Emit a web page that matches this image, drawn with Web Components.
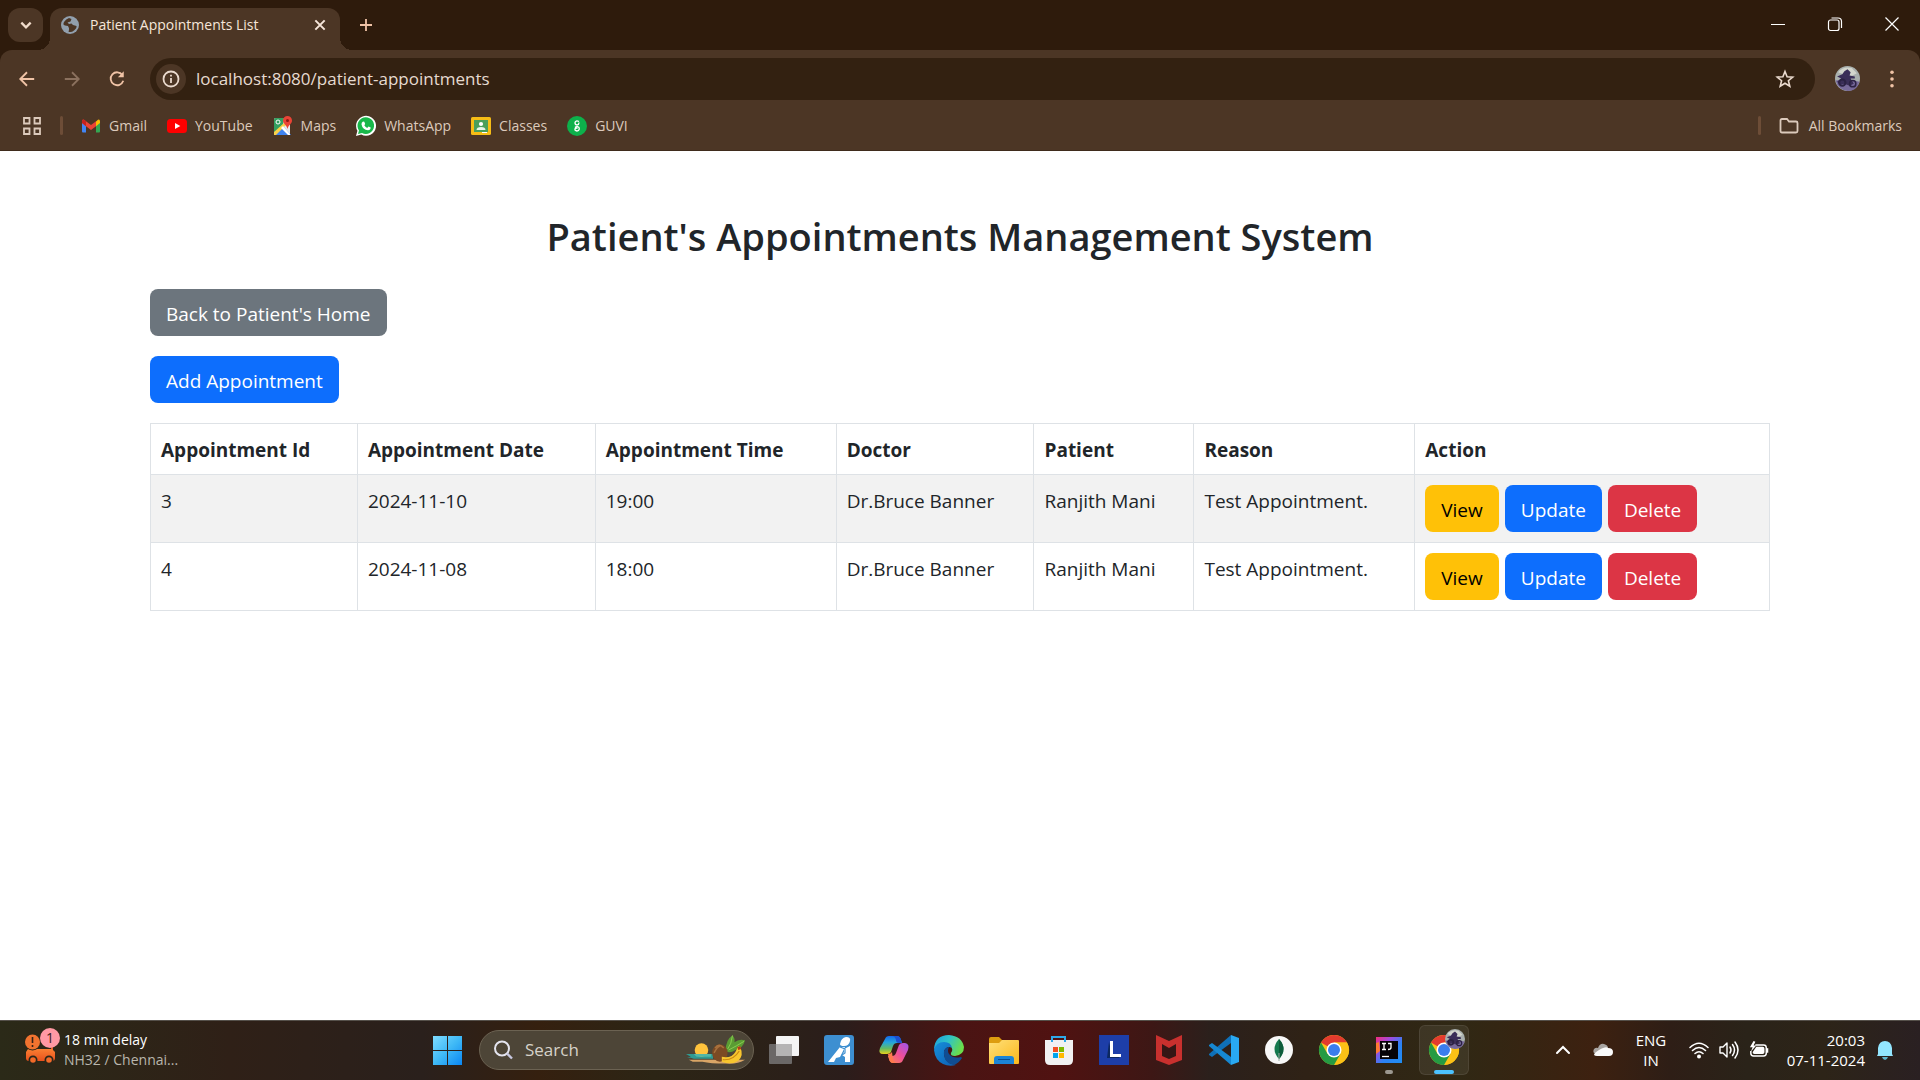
<!DOCTYPE html>
<html lang="en">
<head>
<meta charset="utf-8">
<title>Patient Appointments List</title>
<style>
  html, body { margin: 0; height: 100%; }
  body { font-family: "Open Sans", "Noto Sans", sans-serif; background: #fff; overflow: hidden; }
  desktop-shell { height: 100%; }
</style>
</head>
<body>
<desktop-shell>
  <tab-strip slot="window"><browser-tab icon="globe">Patient Appointments List</browser-tab></tab-strip>
  <address-bar slot="window" url="localhost:8080/patient-appointments"></address-bar>
  <bookmarks-bar slot="window">
    <bookmark-link icon="gmail">Gmail</bookmark-link>
    <bookmark-link icon="youtube">YouTube</bookmark-link>
    <bookmark-link icon="maps">Maps</bookmark-link>
    <bookmark-link icon="whatsapp">WhatsApp</bookmark-link>
    <bookmark-link icon="classes">Classes</bookmark-link>
    <bookmark-link icon="guvi">GUVI</bookmark-link>
    <bookmark-link slot="end" icon="folder">All Bookmarks</bookmark-link>
  </bookmarks-bar>
  <appointments-page slot="page" heading="Patient's Appointments Management System">
    <action-button slot="actions" variant="secondary">Back to Patient's Home</action-button>
    <action-button slot="actions" variant="primary">Add Appointment</action-button>
    <appointments-table></appointments-table>
  </appointments-page>
  <task-bar slot="taskbar">
    <task-app icon="taskview" label="Task view"></task-app>
    <task-app icon="ai" label="Assistant"></task-app>
    <task-app icon="copilot" label="Copilot"></task-app>
    <task-app icon="edge" label="Edge"></task-app>
    <task-app icon="explorer" label="File Explorer"></task-app>
    <task-app icon="store" label="Store"></task-app>
    <task-app icon="lbox" label="L"></task-app>
    <task-app icon="mcafee" label="McAfee"></task-app>
    <task-app icon="vscode" label="VS Code"></task-app>
    <task-app icon="mongo" label="MongoDB Compass"></task-app>
    <task-app icon="chrome" label="Chrome"></task-app>
    <task-app icon="intellij" label="IntelliJ IDEA" state="running"></task-app>
    <task-app icon="chromeuser" label="Chrome profile" state="active"></task-app>
    <system-tray slot="tray"></system-tray>
  </task-bar>
</desktop-shell>

<script>
const line = (w, c = 'currentColor') => `fill="none" stroke="${c}" stroke-width="${w}"`;

const chromeMark = `
  <circle cx="15" cy="15" r="15" fill="#fbc116"/>
  <path d="M15 15 2 7.500A15 15 0 0 1 28 7.500H15Z" fill="#e33b2e"/>
  <path d="M28 7.500A15 15 0 0 1 15 30L21.500 18.750 15 7.500Z" fill="#fbc116"/>
  <path d="M2 7.500A15 15 0 0 0 15 30L21.500 18.750 15 20 8.500 18.750Z" fill="#259b43"/>
  <circle cx="15" cy="15" r="7.500" fill="#fff"/><circle cx="15" cy="15" r="6" fill="#3b7ded"/>`;

const bikePhoto = (cx, cy, r) => `
  <g transform="translate(${cx} ${cy}) scale(${r / 12})">
    <circle r="12" fill="#a9b0ae"/>
    <path d="M-9-6Q-4-12 4-10L9-5 3-2-4-4Z" fill="#d3d6cd"/>
    <path d="M-11.500 2Q0 0 11.500 3 9 12 0 12-9 11-11.500 2Z" fill="#77699a"/>
    <path d="M-10-2-5-4-3-7 0-9 3-6 2-3 7-2 7 0 3 0 6 5 2 7-3 5-7 6-10 3-6 0Z" fill="#3a2e58"/>
    <circle cx="-5" cy="4" r="3" ${line(2, '#2c2244')}/><circle cx="5" cy="5" r="3" ${line(1.5, '#2c2244')}/>
  </g>`;

const ICONS = {
  chevronDown: ['0 0 12 12', `<path d="M2 4l4 4 4-4" ${line(2)}/>`],
  chevronUp: ['0 0 16 16', `<path d="M2 11l6-6 6 6" ${line(2)} stroke-linecap="round"/>`],
  close: ['0 0 12 12', `<path d="M2 2l8 8M10 2l-8 8" ${line(1.7)}/>`],
  plus: ['0 0 14 14', `<path d="M7 1v12M1 7h12" ${line(1.8)}/>`],
  minimize: ['0 0 14 14', `<path d="M0 7.500h14" ${line(1)}/>`],
  restore: ['0 0 14 14', `<rect x=".5" y="3" width="10.500" height="10.500" rx="2" ${line(1.2)}/><path d="M3.500 1h6.500q3.500 0 3.500 3.500V11" ${line(1.2)}/>`],
  winclose: ['0 0 14 14', `<path d="M.5.5l13 13M13.500.5l-13 13" ${line(1.2)}/>`],
  globe: ['0 0 18 18', `<circle cx="9" cy="9" r="9" fill="#92a0ae"/><path d="M8 2Q5 3 3 6 1.500 9 4 9.500L7 10 8 12.500 7 15.500Q10 17 13 14.500 16 12 15.500 10L12 9 10.500 7.500 8 8 6.500 6.500 9.500 5.500 10.500 3Z" fill="#4c3625"/><path d="M11 2.500 14 5 15.500 8.500 12.500 8 10.500 6.500Z" fill="#92a0ae"/><path d="M4 10.500 7 11 8 13 7.500 16 4.500 14Z" fill="#92a0ae"/>`],
  back: ['0 0 20 20', `<path d="M18 10H3M10 2.500 2.500 10l7.500 7.500" ${line(2)}/>`],
  forward: ['0 0 20 20', `<path d="M2 10h15M10 2.500 17.500 10 10 17.500" ${line(2)}/>`],
  reload: ['0 0 20 20', `<path d="M16 5.500A7.200 7.200 0 1 0 17 12" ${line(2)}/><path d="M17.500 1.500V8H11Z" fill="currentColor"/>`],
  info: ['0 0 18 18', `<circle cx="9" cy="9" r="7.500" ${line(1.8)}/><path d="M9 8v5M9 4.800v1.800" ${line(1.8)}/>`],
  star: ['0 0 20 20', `<path d="M10 2.500l2.100 5.200 5.600.4-4.300 3.600 1.400 5.500L10 14.200l-4.800 3 1.400-5.500-4.300-3.600 5.600-.4Z" ${line(1.6)}/>`],
  dots: ['0 0 20 20', `<circle cx="10" cy="2.500" r="2" fill="currentColor"/><circle cx="10" cy="10" r="2" fill="currentColor"/><circle cx="10" cy="17.500" r="2" fill="currentColor"/>`],
  avatar: ['0 0 25 25', bikePhoto(12.5, 12.5, 12.5)],
  grid: ['0 0 18 18', `<path d="M1 1h5.500v5.500H1ZM11.500 1H17v5.500h-5.500ZM1 11.500h5.500V17H1ZM11.500 11.500H17V17h-5.500Z" ${line(1.8)}/>`],
  folder: ['0 0 20 20', `<path d="M1.500 15V4.500q0-1.500 1.500-1.500h5l2 2.500h7q1.500 0 1.500 1.500v8q0 1.500-1.500 1.500H3q-1.500 0-1.500-1.500Z" ${line(1.8)}/>`],
  gmail: ['0 0 20 20', `<path d="M1 5v10.500q0 1 1 1h3V9Z" fill="#4285f4"/><path d="M19 5v10.500q0 1-1 1h-3V9Z" fill="#34a853"/><path d="M15 5.500 17 3.700Q19 3 19 5.500V7l-4 3.200Z" fill="#fbbc04"/><path d="M1 7V5.500Q1 3 3 3.700L10 9l5-3.800v5L10 14 5 10.200Z" fill="#ea4335"/><path d="M1 5.500Q1 3 3 3.700l2 1.600v5L1 7Z" fill="#c5221f"/>`],
  youtube: ['0 0 20 20', `<rect x="0" y="3" width="20" height="14" rx="3.500" fill="#f00"/><path d="M8 7l5.300 3L8 13Z" fill="#fff"/>`],
  maps: ['0 0 20 20', `<rect x="1" y="2" width="16" height="17" rx="1.500" fill="#e8eaed"/><path d="M1 3.500Q1 2 2.500 2H11L10 9 1 18Z" fill="#34a060"/><path d="M1 19 10 10l8 9Z" fill="#3f83f0"/><path d="M1 16 11 7l2 2L3 19H1Z" fill="#fbd14a"/><path d="M8 12l2-2 7 8v1h-2Z" fill="#fff"/><circle cx="5" cy="6" r="2" ${line(1, '#fff')}/><path d="M14.500 0a4.500 4.500 0 0 1 4.500 4.500c0 3.500-3.500 4-4.500 8.500-1-4.500-4.500-5-4.500-8.500A4.500 4.500 0 0 1 14.500 0Z" fill="#ea4335"/><circle cx="14.500" cy="4.500" r="1.500" fill="#8c1a14"/>`],
  whatsapp: ['0 0 20 20', `<path d="M0 20l1.400-5.200A10 10 0 1 1 5.300 18.600Z" fill="#fff"/><path d="M2 18l1-3.600A8.300 8.300 0 1 1 6 17Z" fill="#18b84a"/><path d="M7 5.500l1.300.2.900 2.300-.9 1.300q.9 1.800 2.900 2.600l1.300-1.300 2.200 1q0 2.500-2.700 2.700Q6.500 13.500 5.500 8.500 5.300 6.500 7 5.500Z" fill="#fff"/>`],
  classes: ['0 0 20 20', `<rect y="1" width="20" height="18" rx="1.500" fill="#f6bd16"/><rect x="3" y="4" width="14" height="12" fill="#4a9f5b"/><circle cx="10" cy="8" r="2.100" fill="#fff"/><path d="M5.500 14q0-3 4.500-3t4.500 3Z" fill="#e6f4e9"/><path d="M11 16h5v1h-5Z" fill="#fff"/>`],
  guvi: ['0 0 20 20', `<circle cx="10" cy="10" r="10" fill="#0db14b"/><path d="M12 5.500Q8.500 4 8 6.700 8 9 10.300 9 12 8.500 12 6.500M8 11.500Q9 10.500 10.500 10.700 12.500 11.200 12.300 13 11.800 15 10 15 7.500 14.700 8 12.800 8.800 11.500 10.500 12.300" ${line(1.3, '#fff')}/>`],
  traffic: ['0 0 32 32', `<defs><linearGradient id="o" x2="0" y2="1"><stop stop-color="#fb7f32"/><stop offset="1" stop-color="#e9511c"/></linearGradient></defs><path d="M28 18V9" ${line(2, '#e9622a')}/><path d="M4 17h24l3 3v6q0 3-3 3H5q-3 0-3-3v-6Z" fill="url(#o)"/><circle cx="9" cy="28" r="4.500" fill="#29261a"/><circle cx="9" cy="28" r="2.800" fill="#f26a28"/><circle cx="25" cy="28" r="4.500" fill="#29261a"/><circle cx="25" cy="28" r="2.800" fill="#f26a28"/><circle cx="8.500" cy="10" r="8.500" fill="#2b2819"/><circle cx="8.500" cy="10" r="7.500" fill="#f1732f"/><path d="M8.500 5v6M8.500 13v2" ${line(1.6, '#332117')}/>`],
  start: ['0 0 30 30', `<defs><linearGradient id="w" x2="1" y2="1"><stop stop-color="#7fdcff"/><stop offset=".5" stop-color="#3fb9f6"/><stop offset="1" stop-color="#0a86f3"/></linearGradient></defs><path d="M1 1h14v14H1ZM16 1h14v14H16ZM1 16h14v14H1ZM16 16h14v14H16Z" fill="url(#w)"/>`],
  search: ['0 0 20 20', `<circle cx="9" cy="8.500" r="7" ${line(2, '#e4e4ee')}/><path d="M14 13.500l5 5" ${line(2.4, '#c8c8e0')}/>`],
  fruit: ['0 0 64 32', `<path d="M1 20h28v5H9l-3-1H2l4-1Z" fill="#2f9a92"/><path d="M4 26h58q-8 5-20 4-16 0-24-2H8Z" fill="#d9a566"/><circle cx="17" cy="16" r="7" fill="#ffc33c"/><path d="M9 20h18v3H12Z" fill="#52b6a5"/><path d="M42 17Q42 5 49 1q3 3 2 7 5-4 11-2-2 8-10 10-6 4-10 1Z" fill="#5a9c33"/><path d="M44 15Q48 10 49 1M45 16Q53 12 61 7" ${line(1, '#8bcc52')}/><ellipse cx="36" cy="19" rx="8" ry="9" fill="#7b4a24"/><path d="M31 14q4-6 9 0M30 19q3-6 6-7" ${line(1.5, '#a8713d')}/><path d="M38 23q10 2 14-5l3-6 2 1q4 9-2 14-7 5-17 1Z" fill="#f8c62e"/><path d="M39 26q11 1 17-9" ${line(1.2, '#c98713')}/><path d="M54 13l3-1 1 3-3 1Z" fill="#b33a1c"/>`],
  taskview: ['0 0 30 30', `<rect x="0" y="9" width="23" height="20" rx="1" fill="#6b6867"/><rect x="7" y="1" width="23" height="20" rx="1" fill="#f4f4f4"/><path d="M7 9h16v12H7Z" fill="#b5b4b4"/>`],
  ai: ['0 0 30 30', `<rect width="30" height="30" rx="3" fill="#3d8fd1"/><path d="M4 27 16 12h5l-5 10-4 1-2 4Z" fill="#fff"/><path d="M16 9Q17 3 22 2q5 0 4 4-1 5-6 5-4 0-4-2Z" fill="#fff"/><path d="M20 14l6-3v16h-5v-5l-3-2 2-3Z" fill="#fff"/><path d="M16 12l5 2v4l-3 2" ${line(1.2, '#3d8fd1')}/>`],
  copilot: ['0 0 30 30', `<defs><linearGradient id="a" x2="0" y2="1"><stop stop-color="#1468e8"/><stop offset=".35" stop-color="#23a5df"/><stop offset=".7" stop-color="#63bb63"/><stop offset="1" stop-color="#e9d21c"/></linearGradient><linearGradient id="b" x1="1" x2="0" y2="1"><stop stop-color="#9a55ef"/><stop offset=".5" stop-color="#ee4e9a"/><stop offset="1" stop-color="#ff8b45"/></linearGradient></defs><path d="M6 4Q7 1 10 1h8q3 0 4 4l1 3h-5q-3 0-4 3l-2 6q-1 2-4 2H4q-5 0-3-6Z" fill="url(#a)"/><path d="M24 25q-1 3-4 3h-6q-3 0-4-4l-1-3h4q3 0 4-3l3-8q1-2 4-2h2q5 1 3 7Z" fill="url(#b)"/><path d="M13 1h5q3 0 4 4l1 3h-3q-3 0-3-3-1-4-4-4Z" fill="#1c4fd0"/><path d="M9 19q3 0 4-2l1 8q1 3 4 3h-4q-3 0-4-4Z" fill="#ff7a4d"/>`],
  edge: ['0 0 30 30', `<defs><linearGradient id="e" x2="1" y2=".4"><stop stop-color="#1b9de0"/><stop offset=".5" stop-color="#2fc3c8"/><stop offset="1" stop-color="#6ade4c"/></linearGradient><linearGradient id="f" x2="1" y2="1"><stop stop-color="#1590dc"/><stop offset="1" stop-color="#0f5db1"/></linearGradient></defs><path d="M0 14Q1 0 15 0 28 1 30 12q0 8-9 9-5 0-4-3 3-4-1-7Q9 7 3 12Z" fill="url(#e)"/><path d="M0 15Q2 7 10 7q7 0 8 6-5-3-8 3-1 12 12 14-7 2-13-1Q1 25 0 15Z" fill="url(#f)"/><path d="M10 16q2-4 5-4-2 4 0 7 4 5 12 3l1 1q-3 5-8 7-11-2-10-14Z" fill="#104d92"/>`],
  explorer: ['0 0 30 30', `<defs><linearGradient id="x" x2="1" y2="1"><stop stop-color="#ffe07a"/><stop offset="1" stop-color="#fcb81b"/></linearGradient></defs><path d="M0 4q0-2 2-2h8l3 3v4H0Z" fill="#dd9d10"/><path d="M0 8h10l3-3h16q1 0 1 1v22q0 1-1 1H1q-1 0-1-1Z" fill="url(#x)"/><path d="M5 29v-5q0-3 3-3h14q3 0 3 3v5Z" fill="#1c84d6"/><path d="M9 24.500h12" ${line(1, '#0c4e91')}/>`],
  store: ['0 0 30 30', `<path d="M1 5h28v20q0 5-5 5H6q-5 0-5-5Z" fill="#f1f1f2"/><path d="M8 7V2h13v5" ${line(2, '#2ea9e9')}/><path d="M9 12h5v5H9Z" fill="#f25022"/><path d="M15 12h5v5h-5Z" fill="#7fba00"/><path d="M9 18h5v5H9Z" fill="#00a4ef"/><path d="M15 18h5v5h-5Z" fill="#ffb900"/>`],
  lbox: ['0 0 30 30', `<rect width="30" height="30" fill="#1d3ea8"/><path d="M10 7 8 23h12l2-3H13Z" fill="#0c2860"/><path d="M12.500 6v14.500h9.500" ${line(3, '#fff')}/>`],
  mcafee: ['0 0 30 30', `<path d="M2 0l13 6L28 0v25l-13 5-13-5Z" fill="#c8302e"/><path d="M8 9l7 4 7-4v12l-7 3-7-3Z" fill="#341615"/>`],
  vscode: ['0 0 30 30', `<path d="M0 19 22 0v8L3 22 0 20Z" fill="#0f70b8"/><path d="M0 10 3 8 22 22v8L0 11Z" fill="#1688d2"/><path d="M22 0l8 3v24l-8 3Z" fill="#29a9f2"/>`],
  mongo: ['0 0 30 30', `<circle cx="15" cy="15" r="14" fill="#f7f7f7"/><path d="M15 4q9 10 0 20-9-10 0-20Z" fill="#15794f"/><path d="M15 4q9 10 0 20Z" fill="#0d5b3a"/><path d="M15 18v8" ${line(1, '#9aaca2')}/>`],
  chrome: ['0 0 30 30', chromeMark],
  intellij: ['0 0 30 30', `<defs><linearGradient id="i" x2="1" y2="1"><stop stop-color="#f72c7a"/><stop offset=".3" stop-color="#a04be0"/><stop offset=".6" stop-color="#2c82f4"/><stop offset="1" stop-color="#1f8df2"/></linearGradient></defs><rect x="2" y="2" width="26" height="26" fill="url(#i)"/><path d="M2 8l3-1 1 9-4 3Z" fill="#ff7a31"/><rect x="6" y="6" width="18" height="18" fill="#060308"/><path d="M8 8.500h4M10 8.500v6M8 14.500h4M14 8.500h3v4q0 2-3 2" ${line(1.3, '#fff')}/><path d="M8 21.500h7" ${line(1.3, '#fff')}/>`],
  chromeuser: ['0 0 30 30', chromeMark + bikePhoto(26, 4, 10)],
  cloud: ['0 0 20 20', `<path d="M3 14Q-1 13 1 9 3 7 5 8 7 3 11 4q4 1 4 4l-8 6Z" fill="#a9a5a2"/><path d="M1 15q0-2 5-5 7-4 9-2 5 0 5 4t-4 4H4q-2 0-3-1Z" fill="#fafafa"/>`],
  wifi: ['0 0 20 20', `<path d="M1 7.500Q10-1 19 7.500M3.500 10.500q6.500-6 13 0M6 13.500q4-3.500 8 0" ${line(1.6, '#fff')} stroke-linecap="round"/><circle cx="10" cy="16.500" r="2" fill="#fff"/>`],
  volume: ['0 0 20 20', `<path d="M1 7h3l4-4v14l-4-4H1Z" ${line(1.4, '#fff')} stroke-linejoin="round"/><path d="M11 7q2 3 0 6M13.500 4.500q4 5.500 0 11M16 2q6 8 0 16" ${line(1.5, '#fff')} stroke-linecap="round"/>`],
  battery: ['0 0 22 20', `<path d="M7 4.500h9q3 0 3 3v6q0 3-3 3H5q-3 0-3-3V11" ${line(1.6, '#fff')}/><path d="M8 6.500h7q2 0 2 2v4q0 2-2 2H6q-2 0-2-2Z" fill="#fff"/><path d="M20 8v5" ${line(2.4, '#fff')}/><path d="M5 0 1 7h3l-2 5 6-7H5L7 1Z" fill="#fff"/>`],
  bell: ['0 0 20 20', `<path d="M3 14V8q1-7 7-7t7 7v6l1 2H2Z" fill="#93e6ff"/><path d="M7 17h6q-1 3-3 3t-3-3Z" fill="#5fb3cc"/>`]
};

const define = (name, css, html) => {
  customElements.define(name, class extends HTMLElement {
    connectedCallback() {
      if (this.shadowRoot) return;
      const root = this.attachShadow({ mode: 'open' });
      const t = document.createElement('template');
      t.innerHTML = `<style>:host,*{box-sizing:border-box}button,input{font:inherit;color:inherit;border:0;background:none;padding:0}button{display:grid;place-items:center;flex:none}a{color:inherit;text-decoration:none}${css}</style>` +
        (typeof html === 'function' ? html(this) : html);
      root.append(t.content.cloneNode(true));
    }
  });
};
const attr = (el, n) => el.getAttribute(n) || '';

define('ui-icon', `:host{display:block;flex:none}svg{display:block;width:100%;height:100%;overflow:visible}`, el => {
  const [box, body] = ICONS[attr(el, 'name')];
  return `<svg viewBox="${box}" aria-hidden="true">${body}</svg>`;
});

define('desktop-shell', `
  :host{display:flex;flex-direction:column}
  header{background:#2e1b0c;flex:none}
  main{flex:1;min-height:0;overflow:auto}`,
  `<header><slot name="window"></slot></header><main><slot name="page"></slot></main><slot name="taskbar"></slot>`);

define('tab-strip', `
  :host{display:flex;height:50px;padding-left:8px;color:#f1dccb}
  .menu{width:35px;height:34px;margin:8px 7px 0 0;border-radius:12px;background:#4c3625}
  .menu ui-icon{width:14px;height:14px}
  .new{width:52px;height:50px;color:#f0c3a6}
  .new ui-icon{width:14px;height:14px}
  .controls{display:flex;margin-left:auto;color:#fff}
  .controls button{width:57px;height:48px}
  .controls ui-icon{width:14px;height:14px}`,
  `<button class="menu" aria-label="Search tabs"><ui-icon name="chevronDown"></ui-icon></button>
   <slot></slot>
   <button class="new" aria-label="New tab"><ui-icon name="plus"></ui-icon></button>
   <div class="controls">
     <button aria-label="Minimize"><ui-icon name="minimize"></ui-icon></button>
     <button aria-label="Restore"><ui-icon name="restore"></ui-icon></button>
     <button aria-label="Close"><ui-icon name="winclose"></ui-icon></button>
   </div>`);

define('browser-tab', `
  :host{display:flex;align-items:center;gap:11px;width:290px;height:42px;margin-top:8px;padding:0 13px 8px 11px;border-radius:12px 12px 0 0;background:#4c3625;position:relative;font-size:14px;line-height:20px;color:#f6e6da}
  :host::before,:host::after{content:"";position:absolute;bottom:0;width:12px;height:12px}
  :host::before{right:100%;background:radial-gradient(circle at 0 0,transparent 12px,#4c3625 12px)}
  :host::after{left:100%;background:radial-gradient(circle at 100% 0,transparent 12px,#4c3625 12px)}
  .fav{width:18px;height:18px}
  span{flex:1;white-space:nowrap}
  button ui-icon{width:14px;height:14px}`,
  el => `<ui-icon class="fav" name="${attr(el, 'icon')}"></ui-icon><span><slot></slot></span><button aria-label="Close tab"><ui-icon name="close"></ui-icon></button>`);

define('address-bar', `
  :host{display:flex;align-items:center;height:51px;padding:6px 9px 0 8px;border-radius:12px 12px 0 0;background:#4c3625;color:#f0c3a6}
  button{width:38px;height:38px}
  .nav{display:flex;gap:7px;margin-right:14px}
  .nav ui-icon,.menu ui-icon{width:18px;height:18px}
  .off{color:#8b715e}
  form{flex:1;display:flex;align-items:center;height:42px;padding:0 11px 0 6px;border-radius:21px;background:#332111;color:#eadace}
  .site{width:30px;height:30px;border-radius:50%;background:#4c3625}
  .site ui-icon{width:18px;height:18px}
  input{flex:1;min-width:0;margin-left:10px;outline:0;font-size:17px;line-height:24px;color:#e6dad0}
  .star ui-icon{width:20px;height:20px}
  .user{margin-left:13px}
  .user ui-icon{width:25px;height:25px}
  .menu{margin-left:7px}`,
  el => `<div class="nav">
     <button aria-label="Back"><ui-icon name="back"></ui-icon></button>
     <button class="off" aria-label="Forward"><ui-icon name="forward"></ui-icon></button>
     <button aria-label="Reload"><ui-icon name="reload"></ui-icon></button>
   </div>
   <form><button class="site" type="button" aria-label="Site information"><ui-icon name="info"></ui-icon></button>
     <input type="text" aria-label="Address" value="${attr(el, 'url')}">
     <button class="star" type="button" aria-label="Bookmark this page"><ui-icon name="star"></ui-icon></button></form>
   <button class="user" aria-label="Profile"><ui-icon name="avatar"></ui-icon></button>
   <button class="menu" aria-label="Menu"><ui-icon name="dots"></ui-icon></button>`);

define('bookmarks-bar', `
  :host{display:flex;align-items:center;height:50px;padding:0 18px 0 22px;background:#4c3625;border-bottom:1px solid #3f2b1c;color:#dccabc}
  ui-icon{width:20px;height:18px}
  .rule{width:3px;height:19px;border-radius:2px;background:#6d4d37;margin:0 18px}
  nav{display:flex;gap:20px}
  .end{display:flex;align-items:center;margin-left:auto}`,
  `<ui-icon name="grid"></ui-icon><div class="rule"></div><nav><slot></slot></nav>
   <div class="end"><div class="rule"></div><slot name="end"></slot></div>`);

define('bookmark-link', `
  :host{display:block}
  a{display:flex;align-items:center;gap:8px;font-size:14px;line-height:20px;white-space:nowrap}
  :host([slot=end]) a{gap:10px}
  ui-icon{width:20px;height:20px}`,
  el => `<a href="#"><ui-icon name="${attr(el, 'icon')}"></ui-icon><slot></slot></a>`);

define('appointments-page', `
  :host{display:block;padding:58px 16px 0;color:#212529}
  section{max-width:1620px;margin:0 auto;display:flex;flex-direction:column;align-items:flex-start;gap:20px}
  h1{margin:0;align-self:stretch;text-align:center;font-size:38px;line-height:54px;font-weight:600;padding:0 0 6px}
  ::slotted(appointments-table){align-self:stretch}`,
  el => `<section><h1>${attr(el, 'heading')}</h1><slot name="actions"></slot><slot></slot></section>`);

define('action-button', `
  :host{display:inline-block;--bg:#0d6efd;--fg:#fff}
  :host([variant=secondary]){--bg:#6c757d}
  :host([variant=warning]){--bg:#ffc107;--fg:#000}
  :host([variant=danger]){--bg:#dc3545}
  a{display:block;padding:10px 16px 7px;border-radius:8px;background:var(--bg);color:var(--fg);font-size:19px;line-height:30px;white-space:nowrap}`,
  `<a href="#"><slot></slot></a>`);

const COLUMNS = [['Appointment Id', 207], ['Appointment Date', 238], ['Appointment Time', 241], ['Doctor', 198], ['Patient', 160], ['Reason', 221], ['Action', 355]];
const ROWS = [
  ['3', '2024-11-10', '19:00', 'Dr.Bruce Banner', 'Ranjith Mani', 'Test Appointment.'],
  ['4', '2024-11-08', '18:00', 'Dr.Bruce Banner', 'Ranjith Mani', 'Test Appointment.']
];
define('appointments-table', `
  :host{display:block}
  table{width:100%;table-layout:fixed;border-collapse:collapse;font-size:19px;line-height:30px}
  th,td{border:1px solid #dee2e6;padding:11px 10px 9px;text-align:left;vertical-align:top;white-space:nowrap}
  td:last-child{padding:10px}
  th{font-weight:700}
  tbody tr:nth-child(odd){background:#f2f2f2}
  .acts{display:flex;gap:6px}`,
  () => `<table><colgroup>${COLUMNS.map(c => `<col style="width:${(c[1] / 16.2).toFixed(2)}%">`).join('')}</colgroup>
   <thead><tr>${COLUMNS.map(c => `<th scope="col">${c[0]}</th>`).join('')}</tr></thead>
   <tbody>${ROWS.map(r => `<tr>${r.map(v => `<td>${v}</td>`).join('')}<td><div class="acts">
     <action-button variant="warning">View</action-button><action-button variant="primary">Update</action-button><action-button variant="danger">Delete</action-button></div></td></tr>`).join('')}</tbody></table>`);

define('task-bar', `
  :host{display:flex;align-items:center;flex:none;height:60px;padding-bottom:2px;color:#fff;border-top:1px solid #55504a;
    background:linear-gradient(90deg,#2b2a18 0,#2f2017 12%,#2a201c 22%,#35200f 28%,#2c2515 34%,#2b2019 41%,#2b1d1b 44%,#4a1413 50%,#501211 55%,#3d1715 60%,#2b201c 63%,#2f2216 68%,#302814 76%,#3d2110 83%,#2e1e16 87%,#2a2319 91%,#2d2418 95%,#2a2022 100%)}
  .weather{display:flex;align-items:center;gap:4px;width:422px;padding-left:24px;font-size:14px;line-height:20px;text-align:left}
  .pic{position:relative;width:36px;height:36px}
  .pic ui-icon{width:32px;height:32px}
  .badge{position:absolute;right:0;top:-4px;width:20px;height:20px;border-radius:50%;background:#ff99a4;color:#3a1c1c;font-size:14px;line-height:20px;text-align:center}
  .weather small{display:block;font-size:14px;color:#b9b6ad}
  .start{width:50px;height:50px}
  .start ui-icon{width:30px;height:30px}
  label{display:flex;align-items:center;gap:12px;width:275px;height:40px;margin:0 5px 0 7px;padding:0 6px 0 13px;border:1px solid #6b6252;border-radius:20px;background:#4d4537}
  label ui-icon{width:20px;height:20px}
  input{flex:1;min-width:0;outline:0;font-size:17px;line-height:24px}
  input::placeholder{color:#d6d2c9;opacity:1}
  label .fruit{width:62px;height:32px}
  .apps{display:flex;gap:5px}
  ::slotted(system-tray){margin-left:auto}`,
  `<button class="weather"><span class="pic"><ui-icon name="traffic"></ui-icon><span class="badge">1</span></span><span>18 min delay<small>NH32 / Chennai...</small></span></button>
   <button class="start" aria-label="Start"><ui-icon name="start"></ui-icon></button>
   <label><ui-icon name="search"></ui-icon><input type="text" placeholder="Search" aria-label="Search"><ui-icon class="fruit" name="fruit"></ui-icon></label>
   <div class="apps"><slot></slot></div><slot name="tray"></slot>`);

define('task-app', `
  :host{display:block;position:relative}
  button{width:50px;height:50px;border-radius:6px}
  ui-icon{width:30px;height:30px}
  :host([state=active]) button{background:#ffffff12;border:1px solid #ffffff14}
  :host([state])::after{content:"";position:absolute;bottom:1px;left:50%;width:8px;height:4px;margin-left:-4px;border-radius:2px;background:#9c9890}
  :host([state=active])::after{width:20px;margin-left:-10px;background:#4cc2ff}`,
  el => `<button aria-label="${attr(el, 'label')}"><ui-icon name="${attr(el, 'icon')}"></ui-icon></button>`);

define('system-tray', `
  :host{display:flex;align-items:center;padding-right:25px;font-size:15px;line-height:20px}
  ui-icon{width:20px;height:20px}
  .up{width:16px;height:16px}
  .up,.cloud{margin-right:22px}
  .lang{width:32px;text-align:center;margin-right:22px}
  .net{display:flex;gap:10px;width:96px}
  .clock{width:80px;text-align:right;margin-right:10px;white-space:nowrap}
  button{display:flex}
  .lang,.clock{display:block}`,
  `<button aria-label="Show hidden icons"><ui-icon class="up" name="chevronUp"></ui-icon></button>
   <ui-icon class="cloud" name="cloud"></ui-icon>
   <button class="lang">ENG<br>IN</button>
   <button class="net" aria-label="Network, volume, battery"><ui-icon name="wifi"></ui-icon><ui-icon name="volume"></ui-icon><ui-icon name="battery"></ui-icon></button>
   <button class="clock">20:03<br>07-11-2024</button>
   <ui-icon name="bell"></ui-icon>`);
</script>
</body>
</html>
